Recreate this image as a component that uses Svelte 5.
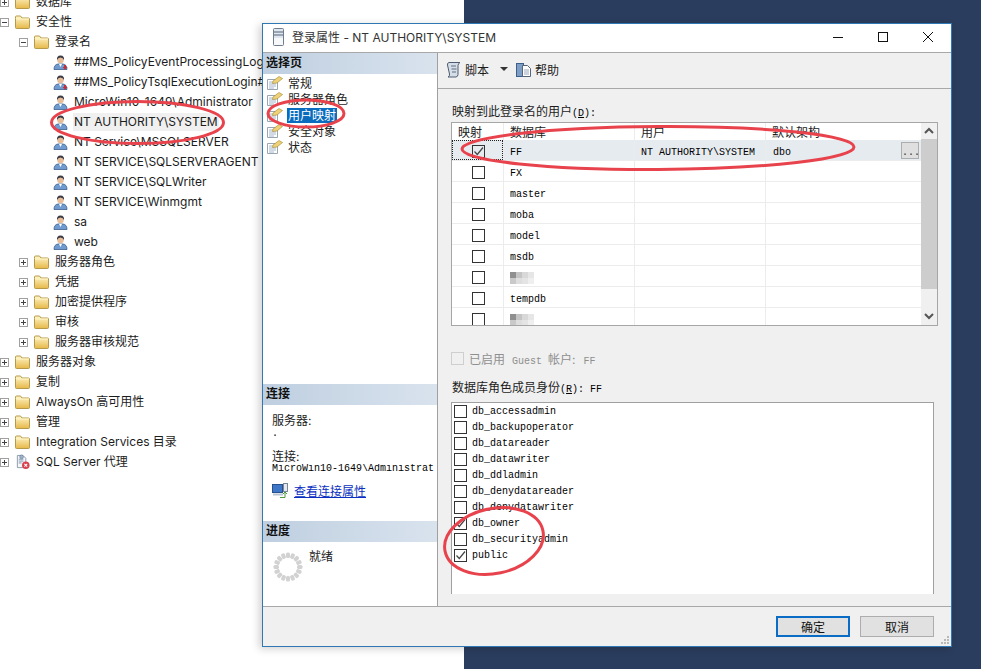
<script>
	// Object explorer rows
	const tree = [
		{ level: 0, label: "数据库", exp: "+", icon: "folder" },
		{ level: 0, label: "安全性", exp: "-", icon: "folder" },
		{ level: 1, label: "登录名", exp: "-", icon: "folder" },
		{ level: 2, label: "##MS_PolicyEventProcessingLogin##", icon: "userx" },
		{ level: 2, label: "##MS_PolicyTsqlExecutionLogin##", icon: "userx" },
		{ level: 2, label: "MicroWin10-1649\\Administrator", icon: "user" },
		{ level: 2, label: "NT AUTHORITY\\SYSTEM", icon: "user", selected: true },
		{ level: 2, label: "NT Service\\MSSQLSERVER", icon: "user" },
		{ level: 2, label: "NT SERVICE\\SQLSERVERAGENT", icon: "user" },
		{ level: 2, label: "NT SERVICE\\SQLWriter", icon: "user" },
		{ level: 2, label: "NT SERVICE\\Winmgmt", icon: "user" },
		{ level: 2, label: "sa", icon: "user" },
		{ level: 2, label: "web", icon: "user" },
		{ level: 1, label: "服务器角色", exp: "+", icon: "folder" },
		{ level: 1, label: "凭据", exp: "+", icon: "folder" },
		{ level: 1, label: "加密提供程序", exp: "+", icon: "folder" },
		{ level: 1, label: "审核", exp: "+", icon: "folder" },
		{ level: 1, label: "服务器审核规范", exp: "+", icon: "folder" },
		{ level: 0, label: "服务器对象", exp: "+", icon: "folder" },
		{ level: 0, label: "复制", exp: "+", icon: "folder" },
		{ level: 0, label: "AlwaysOn 高可用性", exp: "+", icon: "folder" },
		{ level: 0, label: "管理", exp: "+", icon: "folder" },
		{ level: 0, label: "Integration Services 目录", exp: "+", icon: "folder" },
		{ level: 0, label: "SQL Server 代理", exp: "+", icon: "agent" },
	];

	const pages = ["常规", "服务器角色", "用户映射", "安全对象", "状态"];

	// Mapping grid, blurred: the name was pixelated in the screenshot
	const databases = [
		{ name: "FF", user: "NT AUTHORITY\\SYSTEM", schema: "dbo", checked: true },
		{ name: "FX" },
		{ name: "master" },
		{ name: "moba" },
		{ name: "model" },
		{ name: "msdb" },
		{ blurred: true },
		{ name: "tempdb" },
		{ blurred: true },
	];

	const roles = [
		{ name: "db_accessadmin" },
		{ name: "db_backupoperator" },
		{ name: "db_datareader" },
		{ name: "db_datawriter" },
		{ name: "db_ddladmin" },
		{ name: "db_denydatareader" },
		{ name: "db_denydatawriter" },
		{ name: "db_owner", checked: true },
		{ name: "db_securityadmin" },
		{ name: "public", checked: true },
	];

	const blurShades = ["#8f8f8f", "#c4c4c4", "#d8d8d8", "#e6e6e6", "#c9c9c9", "#dedede", "#e4e4e4", "#efefef"];
	const spinnerDots = Array.from({ length: 16 }, (_, i) => (i * 360) / 16);
</script>

{#snippet folder()}
	<svg width="15" height="14" viewBox="0 0 15 14">
		<path d="M.5 3.500V2q0-1 1-1h4l1.500 2h6.500q1 0 1 1v8.500q0 1-1 1h-12q-1 0-1-1z" fill="url(#folderFill)" stroke="#b59a4a" />
		<path d="M1 4h13" stroke="#fff6c8" />
	</svg>
{/snippet}

{#snippet user(locked)}
	<svg width="15" height="15" viewBox="-1 0 15 15">
		<path d="M0 14.500q0-5 4-5.500h5q4 .5 4 5.500z" fill="#6f9bd0" stroke="#2c4f80" stroke-width=".7" />
		<path d="M5 9l1.500 3 1.500-3z" fill="#fff" />
		<circle cx="6.500" cy="5" r="3.300" fill="#e8bd9a" />
		<path d="M3 5q-.5-4.500 3.500-4.500t3.500 4.500q-1-2.500-3.500-2.500t-3.500 2.500" fill="#3c3a44" />
		{#if locked}
			<path d="M10 10h2v2h1.500l-2.500 2.800-2.500-2.800H10z" fill="#c0303c" />
		{/if}
	</svg>
{/snippet}

{#snippet agent()}
	<svg width="16" height="16" viewBox="0 0 16 16">
		<path d="M2.500 1h6l3 3v10h-9z" fill="#f4f6f8" stroke="#8a97a6" />
		<path d="M4 5h5M4 7h5M4 9h3" stroke="#7c93b2" />
		<circle cx="7" cy="2.500" r="2" fill="#9fb4cc" stroke="#5f7690" stroke-width=".6" />
		<circle cx="11.500" cy="11.500" r="4" fill="#d9414f" />
		<path d="M10 10l3 3M13 10l-3 3" stroke="#fff" stroke-width="1.100" />
	</svg>
{/snippet}

{#snippet pageIcon()}
	<svg width="16" height="14" viewBox="0 0 16 14">
		<path d="M.5 3.500h10v10H.5z" fill="#fff" stroke="#9aa5b2" />
		<path d="M2 6h7M2 8h7M2 10h7M2 12h5" stroke="#a3b5ca" />
		<path d="M6 5l6-4.500 3.500 2-5.500 4.500-4.500.5z" fill="#edd27a" stroke="#a5842a" stroke-width=".6" />
	</svg>
{/snippet}

{#snippet checkbox(checked)}
	<span class="box">
		{#if checked}
			<svg width="11" height="11" viewBox="0 0 11 11"><path d="M1.500 5.500l2.800 3L10 1.500" fill="none" stroke="#444" stroke-width="1.200" /></svg>
		{/if}
	</span>
{/snippet}

{#snippet blur()}
	<span class="blur">
		{#each blurShades as shade}
			<i style="background: {shade}"></i>
		{/each}
	</span>
{/snippet}

<div class="screen">
	<div class="explorer">
		{#each tree as row}
			<div class="tree-row" style="padding-left: {row.level * 19}px">
				<span class="expander">
					{#if row.exp}
						<span class="exp-box">
							<svg width="9" height="9" viewBox="0 0 9 9">
								<path d={row.exp === "+" ? "M2 4.500h5M4.500 2v5" : "M2 4.500h5"} stroke="#444" />
							</svg>
						</span>
					{/if}
				</span>
				<span class="tree-icon">
					{#if row.icon === "folder"}
						{@render folder()}
					{:else if row.icon === "agent"}
						{@render agent()}
					{:else}
						{@render user(row.icon === "userx")}
					{/if}
				</span>
				<span class="tree-label" class:selected={row.selected}>{row.label}</span>
			</div>
		{/each}
	</div>
	<div class="desktop"></div>

	<!-- floating login properties window -->
	<div class="dialog">
		<header class="titlebar">
			<svg class="title-icon" width="11" height="18" viewBox="0 0 11 18">
				<rect x=".5" y=".5" width="10" height="17" rx="1" fill="#dfe6ee" stroke="#6f7c8c" />
				<path d="M1 4h9M1 7h9" stroke="#55647a" />
				<rect x="1" y="10" width="9" height="7" fill="#f6f8fa" />
			</svg>
			<span class="title">登录属性 - NT AUTHORITY\SYSTEM</span>
			<div class="controls">
				<svg width="12" height="12" viewBox="0 0 12 12"><path d="M1 6.500h10" stroke="#111" /></svg>
				<svg width="12" height="12" viewBox="0 0 12 12"><rect x="1.500" y="1.500" width="9" height="9" fill="none" stroke="#111" /></svg>
				<svg width="12" height="12" viewBox="0 0 12 12"><path d="M1 1l10 10M11 1L1 11" stroke="#111" /></svg>
			</div>
		</header>

		<div class="body">
			<aside class="sidebar">
				<div class="section-head">选择页</div>
				<ul class="pages">
					{#each pages as page, i}
						<li>
							{@render pageIcon()}
							<span class:current={i === 2}>{page}</span>
						</li>
					{/each}
				</ul>

				<div class="section-head">连接</div>
				<div class="connection">
					<div class="conn-label">服务器:</div>
					<div class="mono">.</div>
					<div class="conn-label second">连接:</div>
					<div class="mono conn-user">MicroWin10-1649\Administrat</div>
					<div class="conn-link">
						<svg width="16" height="15" viewBox="0 0 16 15">
							<rect x=".5" y="1.500" width="10" height="8" fill="#3f77c8" stroke="#27508c" />
							<path d="M1 10.500h10v2H1z" fill="#b9c4d2" />
							<rect x="11.500" y=".5" width="4" height="8" fill="#e4e9ef" stroke="#7a8796" />
							<path d="M8 14.500h5v-5M13 9l-2 2M13 9l2 2" fill="none" stroke="#4f9a3c" />
						</svg>
						<span class="link">查看连接属性</span>
					</div>
				</div>

				<div class="section-head">进度</div>
				<div class="progress">
					<svg width="32" height="32" viewBox="0 0 32 32">
						{#each spinnerDots as angle}
							<rect x="14" y="1.500" width="4" height="5.500" rx="1.500" fill="#d2d2d2" transform="rotate({angle} 16 16)" />
						{/each}
					</svg>
					<span>就绪</span>
				</div>
			</aside>

			<main class="content">
				<div class="toolbar">
					<svg width="16" height="17" viewBox="0 0 16 17">
						<path d="M3 1.500h11q-2 1-2 3v9q0 2-2 2.500H2q2-1 1.500-3l-2-9q-.5-2 1.500-2.500z" fill="#d5dde8" stroke="#4f5c70" />
						<path d="M5 5h5M5.500 8h5M6 11h4" stroke="#5f6c80" />
					</svg>
					<span class="tool-text">脚本</span>
					<span class="caret"></span>
					<svg class="help" width="16" height="17" viewBox="0 0 16 17">
						<rect x=".5" y="2.500" width="7" height="13" fill="#7e9ec6" stroke="#3d5f8c" />
						<path d="M6.500 4.500h5l3 3v8h-8z" fill="#fff" stroke="#56657a" />
						<path d="M8 9h5M8 11h5M8 13h5" stroke="#9aa8ba" />
					</svg>
					<span class="tool-text">帮助</span>
				</div>

				<div class="pane">
					<div class="field-label">映射到此登录名的用户<span class="mono">(<u>D</u>):</span></div>

					<div class="grid-box">
						<div class="grid-view">
							<div class="grid-row grid-head">
								<span>映射</span><span>数据库</span><span>用户</span><span>默认架构</span>
							</div>
							{#each databases as db}
								<div class="grid-row" class:active={db.checked}>
									<span class="map-cell" class:focused={db.checked}>{@render checkbox(db.checked)}</span>
									<span class="mono cell">
										{#if db.blurred}{@render blur()}{:else}{db.name}{/if}
									</span>
									<span class="mono cell">{db.user ?? ""}</span>
									<span class="mono cell schema">
										{db.schema ?? ""}
										{#if db.checked}<b class="ellipsis mono">...</b>{/if}
									</span>
								</div>
							{/each}
						</div>
						<div class="scrollbar">
							<svg width="16" height="16" viewBox="0 0 16 16"><path d="M4 10l4-4 4 4" fill="none" stroke="#555" stroke-width="2" /></svg>
							<div class="thumb"></div>
							<svg class="down" width="16" height="16" viewBox="0 0 16 16"><path d="M4 6l4 4 4-4" fill="none" stroke="#555" stroke-width="2" /></svg>
						</div>
					</div>

					<div class="guest">
						<span class="box disabled"></span>
						<span>已启用<span class="mono guest-name">Guest</span>帐户:<span class="mono guest-db">FF</span></span>
					</div>

					<div class="field-label roles-label">数据库角色成员身份<span class="mono">(<u>R</u>): FF</span></div>

					<div class="role-list">
						{#each roles as role}
							<div class="role">
								{@render checkbox(role.checked)}
								<span class="mono">{role.name}</span>
							</div>
						{/each}
					</div>
				</div>
			</main>
		</div>

		<footer class="footer">
			<button class="btn primary">确定</button>
			<button class="btn">取消</button>
			<svg class="grip" width="9" height="9" viewBox="0 0 9 9">
				<path d="M6 0h2v2H6zM3 3h2v2H3zM6 3h2v2H6zM0 6h2v2H0zM3 6h2v2H3zM6 6h2v2H6z" fill="#b8b8b8" />
			</svg>
		</footer>
	</div>

	<!-- red hand-drawn annotation rings on top of the screenshot -->
	<svg class="rings" width="981" height="669" viewBox="0 0 981 669">
		<defs>
			<linearGradient id="folderFill" x1="0" y1="0" x2="0" y2="1">
				<stop offset="0" stop-color="#fff6c8" />
				<stop offset="1" stop-color="#e6b84a" />
			</linearGradient>
		</defs>
		<g fill="none" stroke="#e8434c" stroke-width="3">
			<ellipse cx="137.500" cy="122.500" rx="86" ry="21" />
			<ellipse cx="306" cy="113.500" rx="38" ry="13.500" />
			<ellipse cx="658" cy="148" rx="196" ry="21.500" transform="rotate(-.3 658 148)" />
			<ellipse cx="494" cy="541" rx="50" ry="32.500" transform="rotate(-12 494 541)" />
		</g>
	</svg>
</div>

<style>
	:global(body) {
		margin: 0;
		background: #2b3d5e;
	}

	.screen {
		position: relative;
		display: flex;
		width: 981px;
		height: 669px;
		overflow: hidden;
		font-family: "Inter", "Noto Sans CJK SC", sans-serif;
		font-size: 12px;
		color: #1c1c1c;
	}

	.mono {
		font-family: "Liberation Mono", "Noto Sans CJK SC", monospace;
		font-size: 10px;
		color: #000;
	}

	/* object explorer */
	.explorer {
		width: 464px;
		height: 677px;
		margin-top: -8px;
		flex: none;
		background: #fff;
	}

	.desktop {
		flex: 1;
		background: #2b3d5e;
	}

	.tree-row {
		display: flex;
		align-items: center;
		height: 20px;
		white-space: nowrap;
	}

	.expander {
		width: 15px;
		flex: none;
		display: flex;
	}

	.exp-box {
		display: flex;
		box-sizing: border-box;
		width: 9px;
		height: 9px;
		outline: 1px solid #a0a0a0;
		outline-offset: -1px;
	}

	.tree-icon {
		width: 15px;
		height: 16px;
		margin-right: 5px;
		flex: none;
		display: flex;
		align-items: center;
	}

	.tree-label {
		padding: 1px 1px;
		line-height: 16px;
	}

	.tree-label.selected {
		background: #f0f0f0;
	}

	/* dialog window */
	.dialog {
		position: absolute;
		left: 262px;
		top: 23px;
		width: 690px;
		height: 624px;
		box-sizing: border-box;
		display: flex;
		flex-direction: column;
		background: #f0f0f0;
		border: 1px solid #2f78b4;
		box-shadow: -3px 2px 8px rgba(0, 0, 0, 0.18);
	}

	.titlebar {
		display: flex;
		align-items: center;
		height: 29px;
		flex: none;
		box-sizing: border-box;
		padding: 0 0 3px 10px;
		background: #fff;
		border-bottom: 1px solid #a8a8a8;
	}

	.title {
		margin-left: 8px;
		color: #333;
	}

	.controls {
		display: flex;
		gap: 33px;
		margin-left: auto;
		margin-right: 17px;
	}

	.body {
		display: flex;
		flex: 1;
		min-height: 0;
		border-bottom: 1px solid #a8a8a8;
	}

	/* left column */
	.sidebar {
		width: 174px;
		flex: none;
		display: flex;
		flex-direction: column;
		background: #fff;
		border-right: 1px solid #a0a0a0;
	}

	.section-head {
		height: 21px;
		line-height: 20px;
		padding-left: 3px;
		flex: none;
		font-weight: 700;
		color: #111;
		background: linear-gradient(90deg, #bfcfe0, #d9e3ee);
	}

	.pages {
		flex: 1;
		margin: 0;
		padding: 1px 0 0 4px;
		list-style: none;
	}

	.pages li {
		display: flex;
		align-items: center;
		gap: 4px;
		height: 16px;
	}

	.pages span {
		padding: 0 1px;
		line-height: 15px;
	}

	.pages .current {
		background: #0a6cbd;
		color: #fff;
	}

	.connection {
		height: 116px;
		flex: none;
		padding: 8px 0 0 9px;
		box-sizing: border-box;
	}

	.conn-label {
		line-height: 15px;
	}

	.conn-label.second {
		margin-top: 10px;
	}

	.conn-user {
		line-height: 10px;
		white-space: nowrap;
		overflow: hidden;
	}

	.conn-link {
		display: flex;
		align-items: center;
		gap: 6px;
		margin-top: 8px;
	}

	.link {
		color: #0a2fc0;
		text-decoration: underline;
	}

	.progress {
		height: 64px;
		flex: none;
		display: flex;
		align-items: flex-start;
		gap: 5px;
		padding: 5px 0 0 9px;
		box-sizing: border-box;
	}

	.progress svg {
		margin-top: 4px;
	}

	/* right column */
	.content {
		flex: 1;
		min-width: 0;
		display: flex;
		flex-direction: column;
	}

	.toolbar {
		display: flex;
		align-items: center;
		height: 36px;
		flex: none;
		box-sizing: border-box;
		padding: 0 0 3px 8px;
		border-bottom: 1px solid #a8a8a8;
	}

	.tool-text {
		margin-left: 3px;
	}

	.caret {
		width: 0;
		height: 0;
		margin-left: 11px;
		border: 4px solid transparent;
		border-top-color: #333;
		border-bottom: 0;
	}

	.help {
		margin-left: 8px;
	}

	.pane {
		padding: 15px 0 0 13px;
	}

	.field-label {
		height: 16px;
		line-height: 16px;
		padding-left: 1px;
		white-space: nowrap;
	}

	.field-label u {
		text-underline-offset: 1px;
	}

	.grid-box {
		display: flex;
		box-sizing: border-box;
		width: 487px;
		height: 204px;
		margin-top: 2px;
		background: #fff;
		border: 1px solid #a6a6a6;
	}

	.grid-view {
		flex: 1;
		min-width: 0;
		overflow: hidden;
	}

	.grid-row {
		display: grid;
		grid-template-columns: 51px 131px 131px 1fr;
		height: 21px;
		border-bottom: 1px solid #ececec;
		box-sizing: border-box;
		align-items: center;
	}

	.grid-row > span {
		height: 100%;
		display: flex;
		align-items: center;
		padding-left: 6px;
		box-sizing: border-box;
		border-left: 1px solid #ececec;
		white-space: nowrap;
	}

	.grid-row > span:first-child {
		border-left: 0;
	}

	.grid-row > .cell {
		padding-top: 4px;
	}

	.grid-row > .schema {
		padding-left: 7px;
	}

	.grid-head {
		height: 17px;
		background: #fff;
		border-bottom: 0;
		color: #222;
	}

	.grid-row.active {
		background: #e6ebf0;
	}

	.grid-row > .map-cell {
		justify-content: center;
		padding: 2px 0 0 1px;
	}

	.map-cell.focused {
		outline: 1px dotted #222;
		outline-offset: -1px;
	}

	.schema {
		position: relative;
	}

	.ellipsis {
		position: absolute;
		right: 2px;
		top: 2px;
		width: 18px;
		height: 17px;
		box-sizing: border-box;
		font-weight: 400;
		text-align: center;
		line-height: 20px;
		color: #333;
		background: #dfdfdf;
		border: 1px solid #adadad;
	}

	.scrollbar {
		position: relative;
		width: 16px;
		flex: none;
		display: flex;
		flex-direction: column;
		background: #f0f0f0;
	}

	.thumb {
		height: 150px;
		background: #cdcdcd;
	}

	.scrollbar .down {
		margin-top: auto;
		margin-bottom: 1px;
	}

	.box {
		display: inline-flex;
		align-items: center;
		justify-content: center;
		box-sizing: border-box;
		width: 13px;
		height: 13px;
		flex: none;
		background: #fff;
		border: 1px solid #333;
	}

	.grid-row.active .box {
		background: #e6ebf0;
	}

	.box.disabled {
		background: #f0f0f0;
		border-color: #cfcfcf;
	}

	.blur {
		display: grid;
		grid-template-columns: repeat(4, 6px);
		grid-template-rows: repeat(2, 6px);
	}

	.blur i {
		display: block;
	}

	.guest {
		display: flex;
		align-items: center;
		gap: 5px;
		height: 14px;
		margin-top: 25px;
		color: #8f8f8f;
		white-space: nowrap;
	}

	.guest .mono {
		color: #8f8f8f;
	}

	.guest-name {
		margin: 0 6px 0 7px;
	}

	.guest-db {
		margin-left: 8px;
	}

	.roles-label {
		margin-top: 15px;
	}

	.role-list {
		box-sizing: border-box;
		width: 483px;
		height: 192px;
		margin-top: 6px;
		background: #fff;
		border: 1px solid #a0a0a0;
		border-bottom: 0;
	}

	.role {
		display: flex;
		align-items: center;
		gap: 5px;
		height: 16px;
		padding-left: 2px;
	}

	.footer {
		position: relative;
		display: flex;
		justify-content: flex-end;
		align-items: flex-start;
		gap: 10px;
		height: 39px;
		flex: none;
		box-sizing: border-box;
		padding: 9px 17px 0 0;
	}

	.btn {
		width: 74px;
		height: 21px;
		padding: 0;
		font: inherit;
		color: #111;
		background: #e1e1e1;
		border: 1px solid #adadad;
	}

	.btn.primary {
		border: 2px solid #0a6cc4;
	}

	.grip {
		position: absolute;
		right: 1px;
		bottom: 1px;
	}

	.rings {
		position: absolute;
		left: 0;
		top: 0;
		pointer-events: none;
	}
</style>
